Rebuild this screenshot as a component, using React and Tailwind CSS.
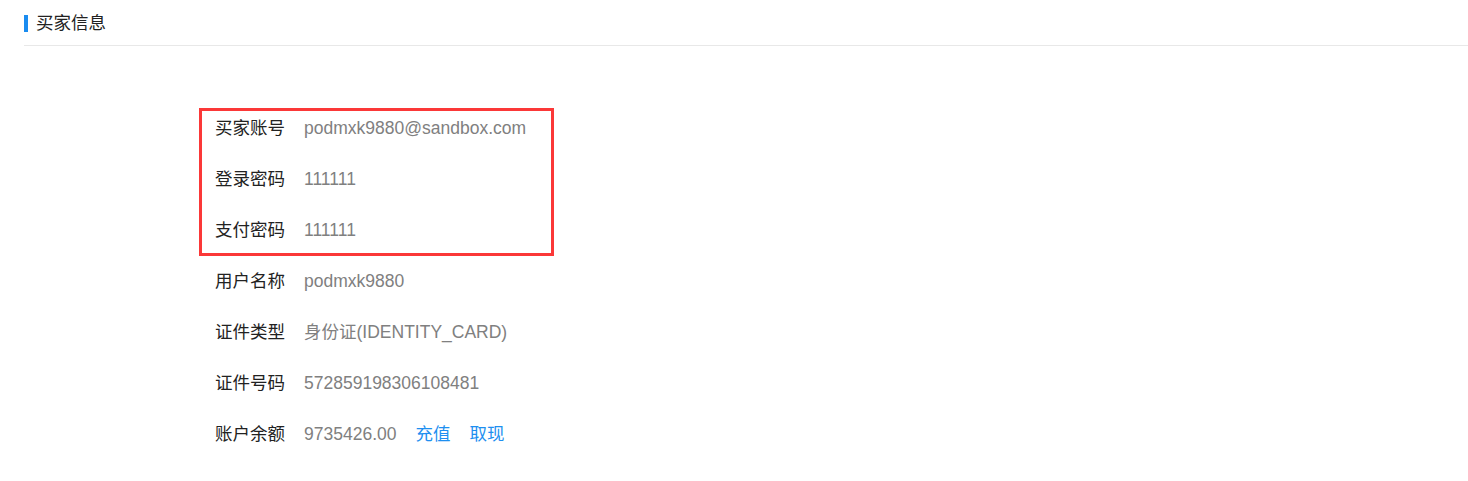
export default function App() {
  const rows = [
    { label: "买家账号", value: "podmxk9880@sandbox.com" },
    { label: "登录密码", value: "111111" },
    { label: "支付密码", value: "111111" },
    { label: "用户名称", value: "podmxk9880" },
    { label: "证件类型", value: "身份证(IDENTITY_CARD)" },
    { label: "证件号码", value: "572859198306108481" },
    { label: "账户余额", value: "9735426.00", links: ["充值", "取现"] },
  ];
  return (
    <div
      className="relative w-[1468px] h-[481px] bg-white text-[17.5px]"
      style={{ fontFamily: '"Liberation Sans", Arial, "Noto Sans CJK SC", sans-serif' }}
    >
      <div className="pl-[24px] pt-[15px]">
        <div className="flex items-center h-[17px] leading-[17px]">
          <div className="w-[4px] h-[17px] bg-[#1a8cf0]" />
          <span className="ml-[8px] text-[#222]">买家信息</span>
        </div>
        <div className="mt-[13px] h-px bg-[#e8e8e8]" />
      </div>
      <div className="pl-[215px] pt-[57px]">
        {rows.map((r) => (
          <div key={r.label} className="flex items-center h-[50.9px]">
            <span className="w-[89px] text-[#222]">{r.label}</span>
            <span className="text-[#808080]">{r.value}</span>
            {r.links &&
              r.links.map((l) => (
                <span key={l} className="ml-[19px] text-[#1e8ff0]">
                  {l}
                </span>
              ))}
          </div>
        ))}
      </div>
      <div className="absolute left-[199px] top-[108px] w-[355px] h-[148px] border-[3px] border-[#fb3838]" />
    </div>
  );
}
